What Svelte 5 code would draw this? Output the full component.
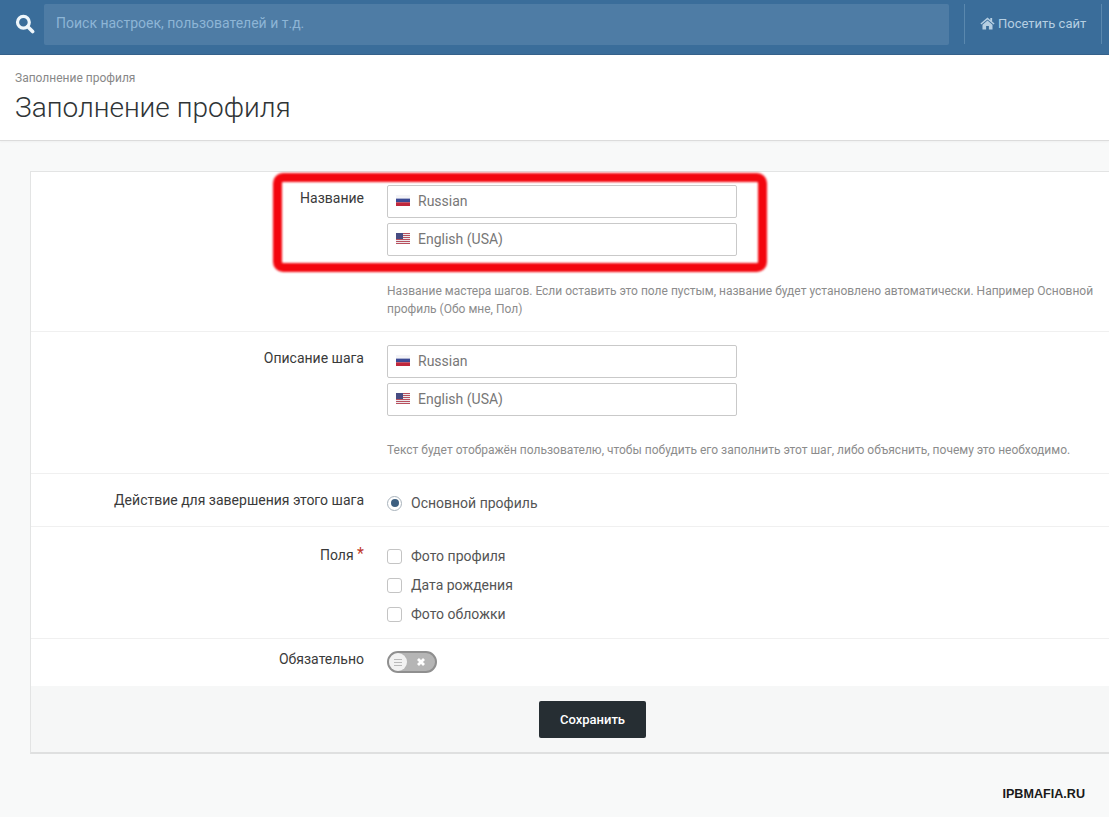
<script>
    const langs = [
        { name: 'Russian', flag: 'ru' },
        { name: 'English (USA)', flag: 'us' }
    ];
    const fields = ['Фото профиля', 'Дата рождения', 'Фото обложки'];
    const stripes = [0, 1, 2, 3, 4, 5];
</script>

{#snippet flag(kind)}
    {#if kind === 'ru'}
        <svg class="flag" viewBox="0 0 14 11" width="14" height="11">
            <rect width="14" height="3.6" fill="#f3f3f7" />
            <rect y="3.6" width="14" height="3.7" fill="#3b4a94" />
            <rect y="7.3" width="14" height="3.7" fill="#c0283c" />
        </svg>
    {:else}
        <svg class="flag" viewBox="0 0 14 11" width="14" height="11">
            <rect width="14" height="11" fill="#ece8ec" />
            {#each stripes as s}
                <rect y={s * 2} width="14" height="1" fill="#b8505e" />
            {/each}
            <rect width="7" height="6" fill="#474c82" />
        </svg>
    {/if}
{/snippet}

{#snippet langInputs()}
    <div class="langs">
        {#each langs as lang}
            <div class="lang-input">
                {@render flag(lang.flag)}
                <span>{lang.name}</span>
            </div>
        {/each}
    </div>
{/snippet}

<header class="topbar">
    <svg class="search-icon" viewBox="0 0 20 20" width="20" height="20">
        <circle cx="8.4" cy="8.2" r="5.9" fill="none" stroke="#eef6fb" stroke-width="3.2" />
        <path d="M12.8 12.8 L17.6 17.6" stroke="#eef6fb" stroke-width="3.6" stroke-linecap="round" />
    </svg>
    <div class="search">Поиск настроек, пользователей и т.д.</div>
    <div class="visit">
        <svg viewBox="0 0 16 14" width="15" height="13">
            <path d="M8 0.6 L0.4 7 L1.4 8.1 L8 2.6 L14.6 8.1 L15.6 7 L13 4.8 V1.2 H11 V3.1 Z M8 3.8 L2.6 8.3 V13.4 H6.5 V9.6 H9.5 V13.4 H13.4 V8.3 Z" fill="#b6cfe2" />
        </svg>
        <span>Посетить сайт</span>
    </div>
</header>

<section class="page-head">
    <div class="crumb">Заполнение профиля</div>
    <h1>Заполнение профиля</h1>
</section>

<main class="card">
    <div class="row row-name">
        <div class="label">Название</div>
        <div class="control">
            {@render langInputs()}
            <p class="hint">Название мастера шагов. Если оставить это поле пустым, название будет установлено автоматически. Например Основной профиль (Обо мне, Пол)</p>
        </div>
    </div>
    <div class="row row-desc">
        <div class="label">Описание шага</div>
        <div class="control">
            {@render langInputs()}
            <p class="hint">Текст будет отображён пользователю, чтобы побудить его заполнить этот шаг, либо объяснить, почему это необходимо.</p>
        </div>
    </div>
    <div class="row row-action">
        <div class="label">Действие для завершения этого шага</div>
        <div class="control">
            <div class="option"><span class="radio"></span>Основной профиль</div>
        </div>
    </div>
    <div class="row row-fields">
        <div class="label">Поля <span class="req">*</span></div>
        <div class="control checks">
            {#each fields as field}
                <div class="option"><span class="check"></span>{field}</div>
            {/each}
        </div>
    </div>
    <div class="row row-toggle">
        <div class="label">Обязательно</div>
        <div class="control">
            <div class="toggle">
                <span class="knob"><i></i><i></i><i></i></span>
                <svg viewBox="0 0 10 10" width="10" height="10">
                    <path d="M2 2 L8 8 M8 2 L2 8" stroke="#fff" stroke-width="2.8" />
                </svg>
            </div>
        </div>
    </div>
    <div class="actions">
        <button>Сохранить</button>
    </div>
</main>

<div class="watermark">IPBMAFIA.RU</div>

<div class="highlight"></div>

<style>
:global(body) {
    margin: 0;
    background: #f8f9f9;
    font-family: Roboto, "Liberation Sans", sans-serif;
    color: #333;
    overflow: hidden;
}
.topbar {
    height: 55px;
    box-sizing: border-box;
    background: #3a6d9a;
    border-bottom: 1px solid #35618a;
    display: flex;
    align-items: flex-start;
    position: relative;
}
.search-icon {
    margin: 14px 0 0 15px;
    flex: none;
}
.search {
    width: 905px;
    height: 41px;
    margin: 4px 0 0 9px;
    box-sizing: border-box;
    padding: 0 12px;
    background: #4e7ca5;
    color: #8db5d6;
    font-size: 14px;
    line-height: 38px;
    border-radius: 2px;
}
.visit {
    margin: 4px 0 0 15px;
    width: 138px;
    height: 40px;
    box-sizing: border-box;
    border-left: 1px solid #5a88ae;
    border-right: 1px solid #5a88ae;
    padding: 0 0 2px 15px;
    display: flex;
    align-items: center;
    gap: 3px;
    color: #b6cfe2;
    font-size: 13px;
}
.page-head {
    height: 86px;
    box-sizing: border-box;
    background: #fff;
    border-bottom: 1px solid #dcdcdc;
    box-shadow: 0 1px 2px rgba(0, 0, 0, 0.04);
    padding: 16px 15px 0;
}
.crumb {
    font-size: 12px;
    line-height: 14px;
    color: #888;
}
h1 {
    margin: 8px 0 0;
    font-size: 28px;
    line-height: 30px;
    font-weight: 300;
    color: #2f3436;
}
.card {
    margin: 30px 0 0 30px;
    width: 1124px;
    height: 583px;
    box-sizing: border-box;
    background: #fff;
    border: 1px solid #e3e4e4;
    border-right: 0;
    border-bottom: 2px solid #dfe0e0;
    display: flex;
    flex-direction: column;
}
.row {
    display: flex;
    box-sizing: border-box;
    border-bottom: 1px solid #f0f0f0;
}
.row-name { height: 160px; padding-top: 13px; }
.row-desc { height: 142px; padding-top: 13px; }
.row-action { height: 53px; padding-top: 19px; }
.row-fields { height: 112px; padding-top: 19px; }
.row-toggle { height: 47px; padding-top: 12px; border-bottom: 0; }
.label {
    width: 333px;
    flex: none;
    text-align: right;
    font-size: 14px;
    line-height: 20px;
    color: #3a3a3a;
    padding-top: 3px;
    box-sizing: border-box;
}
.row-action .label { margin-top: -3px; padding-top: 0; }
.row-fields .label { margin-top: -1px; padding-top: 0; }
.row-toggle .label { margin-top: -2px; padding-top: 0; }
.req {
    color: #c0392b;
    font-size: 16px;
    line-height: 14px;
    vertical-align: 1px;
}
.control {
    margin-left: 23px;
    flex: 1;
    min-width: 0;
}
.langs {
    display: flex;
    flex-direction: column;
    gap: 5px;
}
.lang-input {
    width: 350px;
    height: 33px;
    box-sizing: border-box;
    border: 1px solid #c9c9c9;
    border-radius: 2px;
    display: flex;
    align-items: center;
    padding: 0 0 2px 8px;
    gap: 8px;
    font-size: 14px;
    color: #777;
}
.flag { flex: none; }
.hint {
    margin: 0;
    max-width: 712px;
    font-size: 12px;
    line-height: 18px;
    color: #8c8c8c;
}
.row-name .hint { margin-top: 26px; }
.row-desc .hint { margin-top: 25px; }
.option {
    display: flex;
    align-items: center;
    font-size: 14px;
    height: 20px;
    color: #555;
}
.checks {
    display: flex;
    flex-direction: column;
    gap: 9px;
}
.radio {
    width: 15px;
    height: 15px;
    box-sizing: border-box;
    border: 1px solid #a9b3bc;
    border-radius: 50%;
    margin-right: 9px;
    display: flex;
    align-items: center;
    justify-content: center;
    flex: none;
}
.radio::after {
    content: "";
    width: 8px;
    height: 8px;
    border-radius: 50%;
    background: #3d5f80;
}
.check {
    width: 15px;
    height: 15px;
    box-sizing: border-box;
    border: 1px solid #c4c4c4;
    border-radius: 3px;
    margin-right: 9px;
    flex: none;
}
.toggle {
    width: 50px;
    height: 22px;
    box-sizing: border-box;
    border: 2px solid #8f8f8f;
    border-radius: 11px;
    background: #b5b5b5;
    display: flex;
    align-items: center;
    justify-content: space-between;
    padding-right: 9px;
}
.knob {
    width: 18px;
    height: 18px;
    border-radius: 50%;
    background: #f2f2f2;
    display: flex;
    flex-direction: column;
    align-items: center;
    justify-content: center;
    gap: 2px;
}
.knob i {
    width: 8px;
    height: 1px;
    background: #b9b9b9;
}
.actions {
    flex: 1;
    background: #f6f7f7;
    display: flex;
    justify-content: center;
    align-items: flex-start;
    padding-top: 15px;
}
button {
    width: 107px;
    height: 37px;
    border: 0;
    border-radius: 2px;
    background: #262e33;
    color: #fff;
    font-family: Roboto, "Liberation Sans", sans-serif;
    font-size: 13px;
    font-weight: 500;
}
.watermark {
    margin: 33px 24px 0 0;
    text-align: right;
    font-family: "Liberation Sans", sans-serif;
    font-size: 12.6px;
    font-weight: 700;
    line-height: 14px;
    color: #1a1a1a;
}
.highlight {
    position: absolute;
    left: 273px;
    top: 173px;
    width: 494px;
    height: 99px;
    box-sizing: border-box;
    border: 9px solid #f3060e;
    border-radius: 10px;
    filter: blur(1px);
}
</style>
